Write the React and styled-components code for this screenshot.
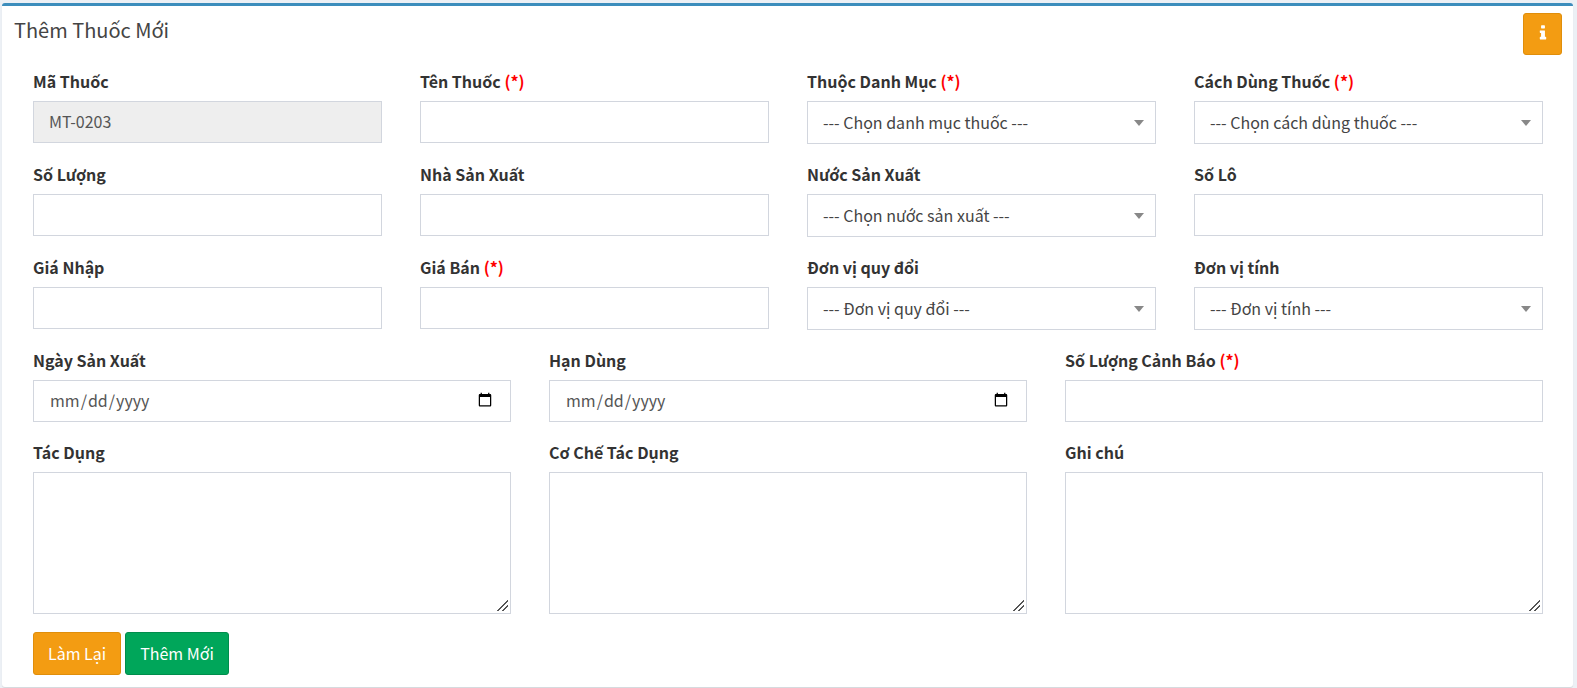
import React from "react";
import styled, { createGlobalStyle, css } from "styled-components";

const GlobalStyle = createGlobalStyle`
  *, *::before, *::after { box-sizing: border-box; }
  body {
    margin: 0;
    background: #ecf0f5;
    color: #333;
    font-family: "Noto Sans CJK SC", "Noto Sans", sans-serif;
    font-size: 16px;
    line-height: 24px;
  }
`;

const Page = styled.main`
  padding: 3px 4px 1px 2px;
`;

const Panel = styled.section`
  background: #fff;
  border-top: 3px solid #3c8dbc;
  border-radius: 3px;
  box-shadow: 0 1px 1px rgba(0, 0, 0, 0.1);
`;

const PanelHeader = styled.header`
  display: flex;
  justify-content: space-between;
  align-items: flex-start;
  padding: 7px 11px 0 12px;
  height: 63px;
`;

const Title = styled.h1`
  margin: 5px 0 0;
  font-size: 20px;
  line-height: 24px;
  font-weight: 400;
  color: #444;
`;

const Form = styled.form`
  display: flex;
  flex-direction: column;
  gap: 18px;
  padding: 0 30px 12px 31px;
`;

const Row = styled.div`
  display: grid;
  grid-template-columns: repeat(${(p) => p.$columns}, 1fr);
  column-gap: 38px;
`;

const FieldBox = styled.div`
  display: flex;
  flex-direction: column;
  gap: 8px;
  min-width: 0;
`;

const Label = styled.label`
  font-weight: 700;
`;

const Required = styled.span`
  color: #f00;
`;

const control = css`
  display: block;
  width: 100%;
  height: 42px;
  margin: 0;
  padding: 0 15px 2px;
  border: 1px solid #d2d6de;
  border-radius: 0;
  background: #fff;
  color: #555;
  font: inherit;
  outline: none;

  &:focus { border-color: #3c8dbc; }
`;

const Input = styled.input`
  ${control}
  &:disabled { background: #eee; }
`;

const TextArea = styled.textarea`
  ${control}
  height: 142px;
  padding: 8px 15px;
  resize: both;

  &::-webkit-resizer {
    background: linear-gradient(135deg, transparent 48%, #555 48%, #555 56%, transparent 56%, transparent 70%, #555 70%, #555 78%, transparent 78%)
      2px 2px / 11px 11px no-repeat;
  }
`;

const SelectBox = styled.div`
  position: relative;

  &::after {
    content: "";
    position: absolute;
    top: 19px;
    right: 12px;
    border: 5px solid transparent;
    border-top: 6px solid #888;
    border-bottom: 0;
    pointer-events: none;
  }
`;

const Select = styled.select`
  ${control}
  height: 43px;
  appearance: none;
  color: #444;
`;

const Actions = styled.div`
  display: flex;
  gap: 4px;
`;

const tones = {
  warning: { fill: "#f39c12", edge: "#e08e0b" },
  success: { fill: "#00a65a", edge: "#008d4c" },
};

const Button = styled.button`
  display: inline-flex;
  align-items: center;
  justify-content: center;
  height: 43px;
  padding: 0 14px 2px;
  border: 1px solid ${(p) => tones[p.$tone].edge};
  border-radius: 3px;
  background: ${(p) => tones[p.$tone].fill};
  color: #fff;
  font: inherit;
  cursor: pointer;
`;

const IconButton = styled(Button)`
  width: 39px;
  height: 42px;
  padding: 0 0 3px;
`;

function InfoIcon() {
  return (
    <svg width="18" height="18" viewBox="0 0 1792 1792" fill="currentColor" aria-hidden="true">
      <path d="M1216 1344v128q0 26-19 45t-45 19h-512q-26 0-45-19t-19-45v-128q0-26 19-45t45-19h64v-384h-64q-26 0-45-19t-19-45v-128q0-26 19-45t45-19h384q26 0 45 19t19 45v576h64q26 0 45 19t19 45zm-128-1152v192q0 26-19 45t-45 19h-256q-26 0-45-19t-19-45v-192q0-26 19-45t45-19h256q26 0 45 19t19 45z" />
    </svg>
  );
}

const rows = [
  [
    { id: "code", label: "Mã Thuốc", value: "MT-0203", disabled: true },
    { id: "name", label: "Tên Thuốc", required: true },
    { id: "category", label: "Thuộc Danh Mục", required: true, kind: "select", placeholder: "--- Chọn danh mục thuốc ---" },
    { id: "usage", label: "Cách Dùng Thuốc", required: true, kind: "select", placeholder: "--- Chọn cách dùng thuốc ---" },
  ],
  [
    { id: "quantity", label: "Số Lượng" },
    { id: "maker", label: "Nhà Sản Xuất" },
    { id: "country", label: "Nước Sản Xuất", kind: "select", placeholder: "--- Chọn nước sản xuất ---" },
    { id: "lot", label: "Số Lô" },
  ],
  [
    { id: "cost", label: "Giá Nhập" },
    { id: "price", label: "Giá Bán", required: true },
    { id: "exchangeUnit", label: "Đơn vị quy đổi", kind: "select", placeholder: "--- Đơn vị quy đổi ---" },
    { id: "unit", label: "Đơn vị tính", kind: "select", placeholder: "--- Đơn vị tính ---" },
  ],
  [
    { id: "made", label: "Ngày Sản Xuất", type: "date" },
    { id: "expiry", label: "Hạn Dùng", type: "date" },
    { id: "alert", label: "Số Lượng Cảnh Báo", required: true },
  ],
  [
    { id: "effect", label: "Tác Dụng", kind: "textarea" },
    { id: "mechanism", label: "Cơ Chế Tác Dụng", kind: "textarea" },
    { id: "note", label: "Ghi chú", kind: "textarea" },
  ],
];

function Control({ field }) {
  if (field.kind === "select") {
    return (
      <SelectBox>
        <Select id={field.id} name={field.id} defaultValue="">
          <option value="">{field.placeholder}</option>
        </Select>
      </SelectBox>
    );
  }
  if (field.kind === "textarea") {
    return <TextArea id={field.id} name={field.id} />;
  }
  return (
    <Input
      id={field.id}
      name={field.id}
      type={field.type || "text"}
      defaultValue={field.value}
      disabled={field.disabled}
    />
  );
}

function Field({ field }) {
  return (
    <FieldBox>
      <Label htmlFor={field.id}>
        {field.label}
        {field.required && <Required> (*)</Required>}
      </Label>
      <Control field={field} />
    </FieldBox>
  );
}

export default function App() {
  return (
    <>
      <GlobalStyle />
      <Page>
        <Panel>
          <PanelHeader>
            <Title>Thêm Thuốc Mới</Title>
            <IconButton type="button" $tone="warning" aria-label="Thông tin">
              <InfoIcon />
            </IconButton>
          </PanelHeader>
          <Form onSubmit={(e) => e.preventDefault()}>
            {rows.map((fields) => (
              <Row key={fields[0].id} $columns={fields.length}>
                {fields.map((field) => (
                  <Field key={field.id} field={field} />
                ))}
              </Row>
            ))}
            <Actions>
              <Button type="reset" $tone="warning">Làm Lại</Button>
              <Button type="submit" $tone="success">Thêm Mới</Button>
            </Actions>
          </Form>
        </Panel>
      </Page>
    </>
  );
}
